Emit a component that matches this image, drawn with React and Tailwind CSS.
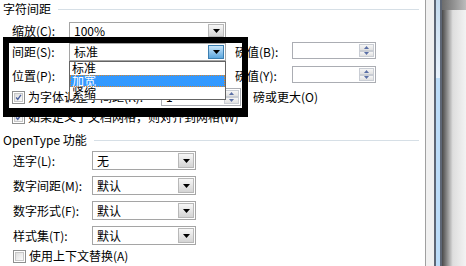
import clsx from "clsx";

function DropButton({ active }) {
    return (
        <div
            className={clsx(
                "flex h-full w-[16px] shrink-0 items-center justify-center border",
                active
                    ? "border-[#3c7fb1] bg-linear-to-b from-[#c8e6fa] to-[#5ba7de]"
                    : "border-[#b8b8b8] bg-linear-to-b from-[#f7f7f7] to-[#d4d4d4]"
            )}
        >
            <svg width="7" height="4" viewBox="0 0 7 4">
                <path d="M0 0h7L3.5 4z" fill="#000" />
            </svg>
        </div>
    );
}

function Combo({ value, className, active }) {
    return (
        <div className={clsx("flex items-stretch border border-[#a5a5a5] bg-white p-px", className)}>
            <span className="flex flex-1 items-center pl-[3px]">{value}</span>
            <DropButton active={active} />
        </div>
    );
}

function SpinButton({ up }) {
    return (
        <div className="flex flex-1 items-center justify-center border border-[#c9cdd4] bg-linear-to-b from-[#f6f6f6] to-[#e1e1e1]">
            <svg width="5" height="3" viewBox="0 0 5 3">
                <path d={up ? "M0 3h5L2.5 0z" : "M0 0h5L2.5 3z"} fill="#5a6fa6" />
            </svg>
        </div>
    );
}

function Spin({ value, className }) {
    return (
        <div className={clsx("flex border border-[#abadb3] bg-white p-px", className)}>
            <span className="flex flex-1 items-center pl-[3px]">{value}</span>
            <div className="flex w-[15px] flex-col">
                <SpinButton up />
                <SpinButton />
            </div>
        </div>
    );
}

function Check({ checked }) {
    return (
        <span className="flex h-[13px] w-[13px] shrink-0 border border-[#8e8f8f] bg-white p-px">
            <span className="flex h-full w-full items-center justify-center border border-[#c7c7c7] bg-linear-to-br from-[#dedede] to-[#fbfbfb]">
                {checked && (
                    <svg width="9" height="9" viewBox="0 0 9 9">
                        <path d="M1.5 4.5L3.6 7L7.6 1.2" fill="none" stroke="#4a5f9c" strokeWidth="1.7" />
                    </svg>
                )}
            </span>
        </span>
    );
}

function SectionTitle({ children, className }) {
    return (
        <div className={clsx("flex h-[18px] items-center gap-[7px]", className)}>
            <span>{children}</span>
            <div className="h-px flex-1 bg-[#d6dfe6]" />
        </div>
    );
}

const spacingRows = [
    { label: "间距(S):", value: "标准", active: true, side: "磅值(B):", top: "mt-[3px]" },
    { label: "位置(P):", value: "", active: false, side: "磅值(Y):", top: "mt-[5px]" },
];

const openTypeRows = [
    { label: "连字(L):", value: "无" },
    { label: "数字间距(M):", value: "默认" },
    { label: "数字形式(F):", value: "默认" },
    { label: "样式集(T):", value: "默认" },
];

export default function App() {
    return (
        <div className="flex h-[266px] w-[466px] overflow-hidden bg-white font-['Noto_Sans_CJK_SC','Noto_Sans',sans-serif] text-[12px] leading-[12px] text-black">
            <div className="relative flex w-[425px] shrink-0 flex-col pl-[3px] pr-[6px]">
                <SectionTitle>字符间距</SectionTitle>

                <div className="mt-[4px] flex h-[17px] items-center pl-[9px]">
                    <span className="w-[57px]">缩放(C):</span>
                    <Combo value="100%" className="h-full w-[157px]" />
                </div>

                {spacingRows.map((row) => (
                    <div key={row.label} className={clsx("flex h-[19px] items-center pl-[9px]", row.top)}>
                        <span className="w-[57px]">{row.label}</span>
                        <Combo value={row.value} active={row.active} className="h-[18px] w-[157px]" />
                        <span className="ml-[9px] w-[57px]">{row.side}</span>
                        <Spin className="h-[17px] w-[84px] self-start" />
                    </div>
                ))}

                <div className="mt-[3px] flex h-[18px] items-center pl-[9px]">
                    <div className="flex w-[149px] items-center gap-[3px]">
                        <Check checked />
                        <span>为字体调整字间距(K):</span>
                    </div>
                    <Spin value="1" className="h-full w-[80px]" />
                    <span className="ml-[12px]">磅或更大(O)</span>
                </div>

                <div className="mt-[4px] flex h-[14px] items-center gap-[3px] pl-[9px]">
                    <Check checked />
                    <span>如果定义了文档网格，则对齐到网格(W)</span>
                </div>

                <SectionTitle className="mt-[7px]">OpenType 功能</SectionTitle>

                <div className="mt-[2px] flex flex-col gap-[6px] pl-[10px]">
                    {openTypeRows.map((row) => (
                        <div key={row.label} className="flex h-[19px] items-center">
                            <span className="w-[79px]">{row.label}</span>
                            <Combo value={row.value} className="h-full w-[104px]" />
                        </div>
                    ))}
                </div>

                <div className="mt-[4px] flex h-[14px] items-center gap-[3px] pl-[10px]">
                    <Check />
                    <span>使用上下文替换(A)</span>
                </div>

                {/* open list of the 间距 combo */}
                <div className="absolute left-[69px] top-[61px] flex h-[39px] w-[157px] flex-col border border-[#646464] bg-white">
                    <div className="h-[13px] shrink-0 pl-[2px] leading-[12px]">标准</div>
                    <div className="h-[12px] shrink-0 bg-[#3399ff] pl-[2px] leading-[12px] text-white outline-1 -outline-offset-1 outline-dotted outline-[#d9862e]">
                        加宽
                    </div>
                    <div className="h-[12px] shrink-0 pl-[2px] leading-[12px]">紧缩</div>
                </div>

                {/* hand-drawn highlight frame */}
                <div className="absolute left-[3px] top-[37px] h-[80px] w-[245px] border-[6px] border-b-[9px] border-black" />
            </div>

            <div className="w-px shrink-0 bg-[#a0a0a0]" />
            <div className="w-[8px] shrink-0 bg-[#f0f0f0]" />
            <div className="flex w-[8px] shrink-0 flex-col border-x-2 border-[#5d6675]">
                <div className="h-[78px] bg-linear-to-b from-[#c3d9ec] to-[#e8f2fc]" />
                <div className="flex-1 bg-[#bcdcf8]" />
            </div>
            <div className="flex flex-1 flex-col bg-linear-to-r from-[#4a4a4a] via-[#dedede] via-45% to-[#f3f3f3]">
                <div className="h-[10px] bg-linear-to-r from-[#6c6c6c] to-[#bcbcbc]" />
            </div>
        </div>
    );
}
